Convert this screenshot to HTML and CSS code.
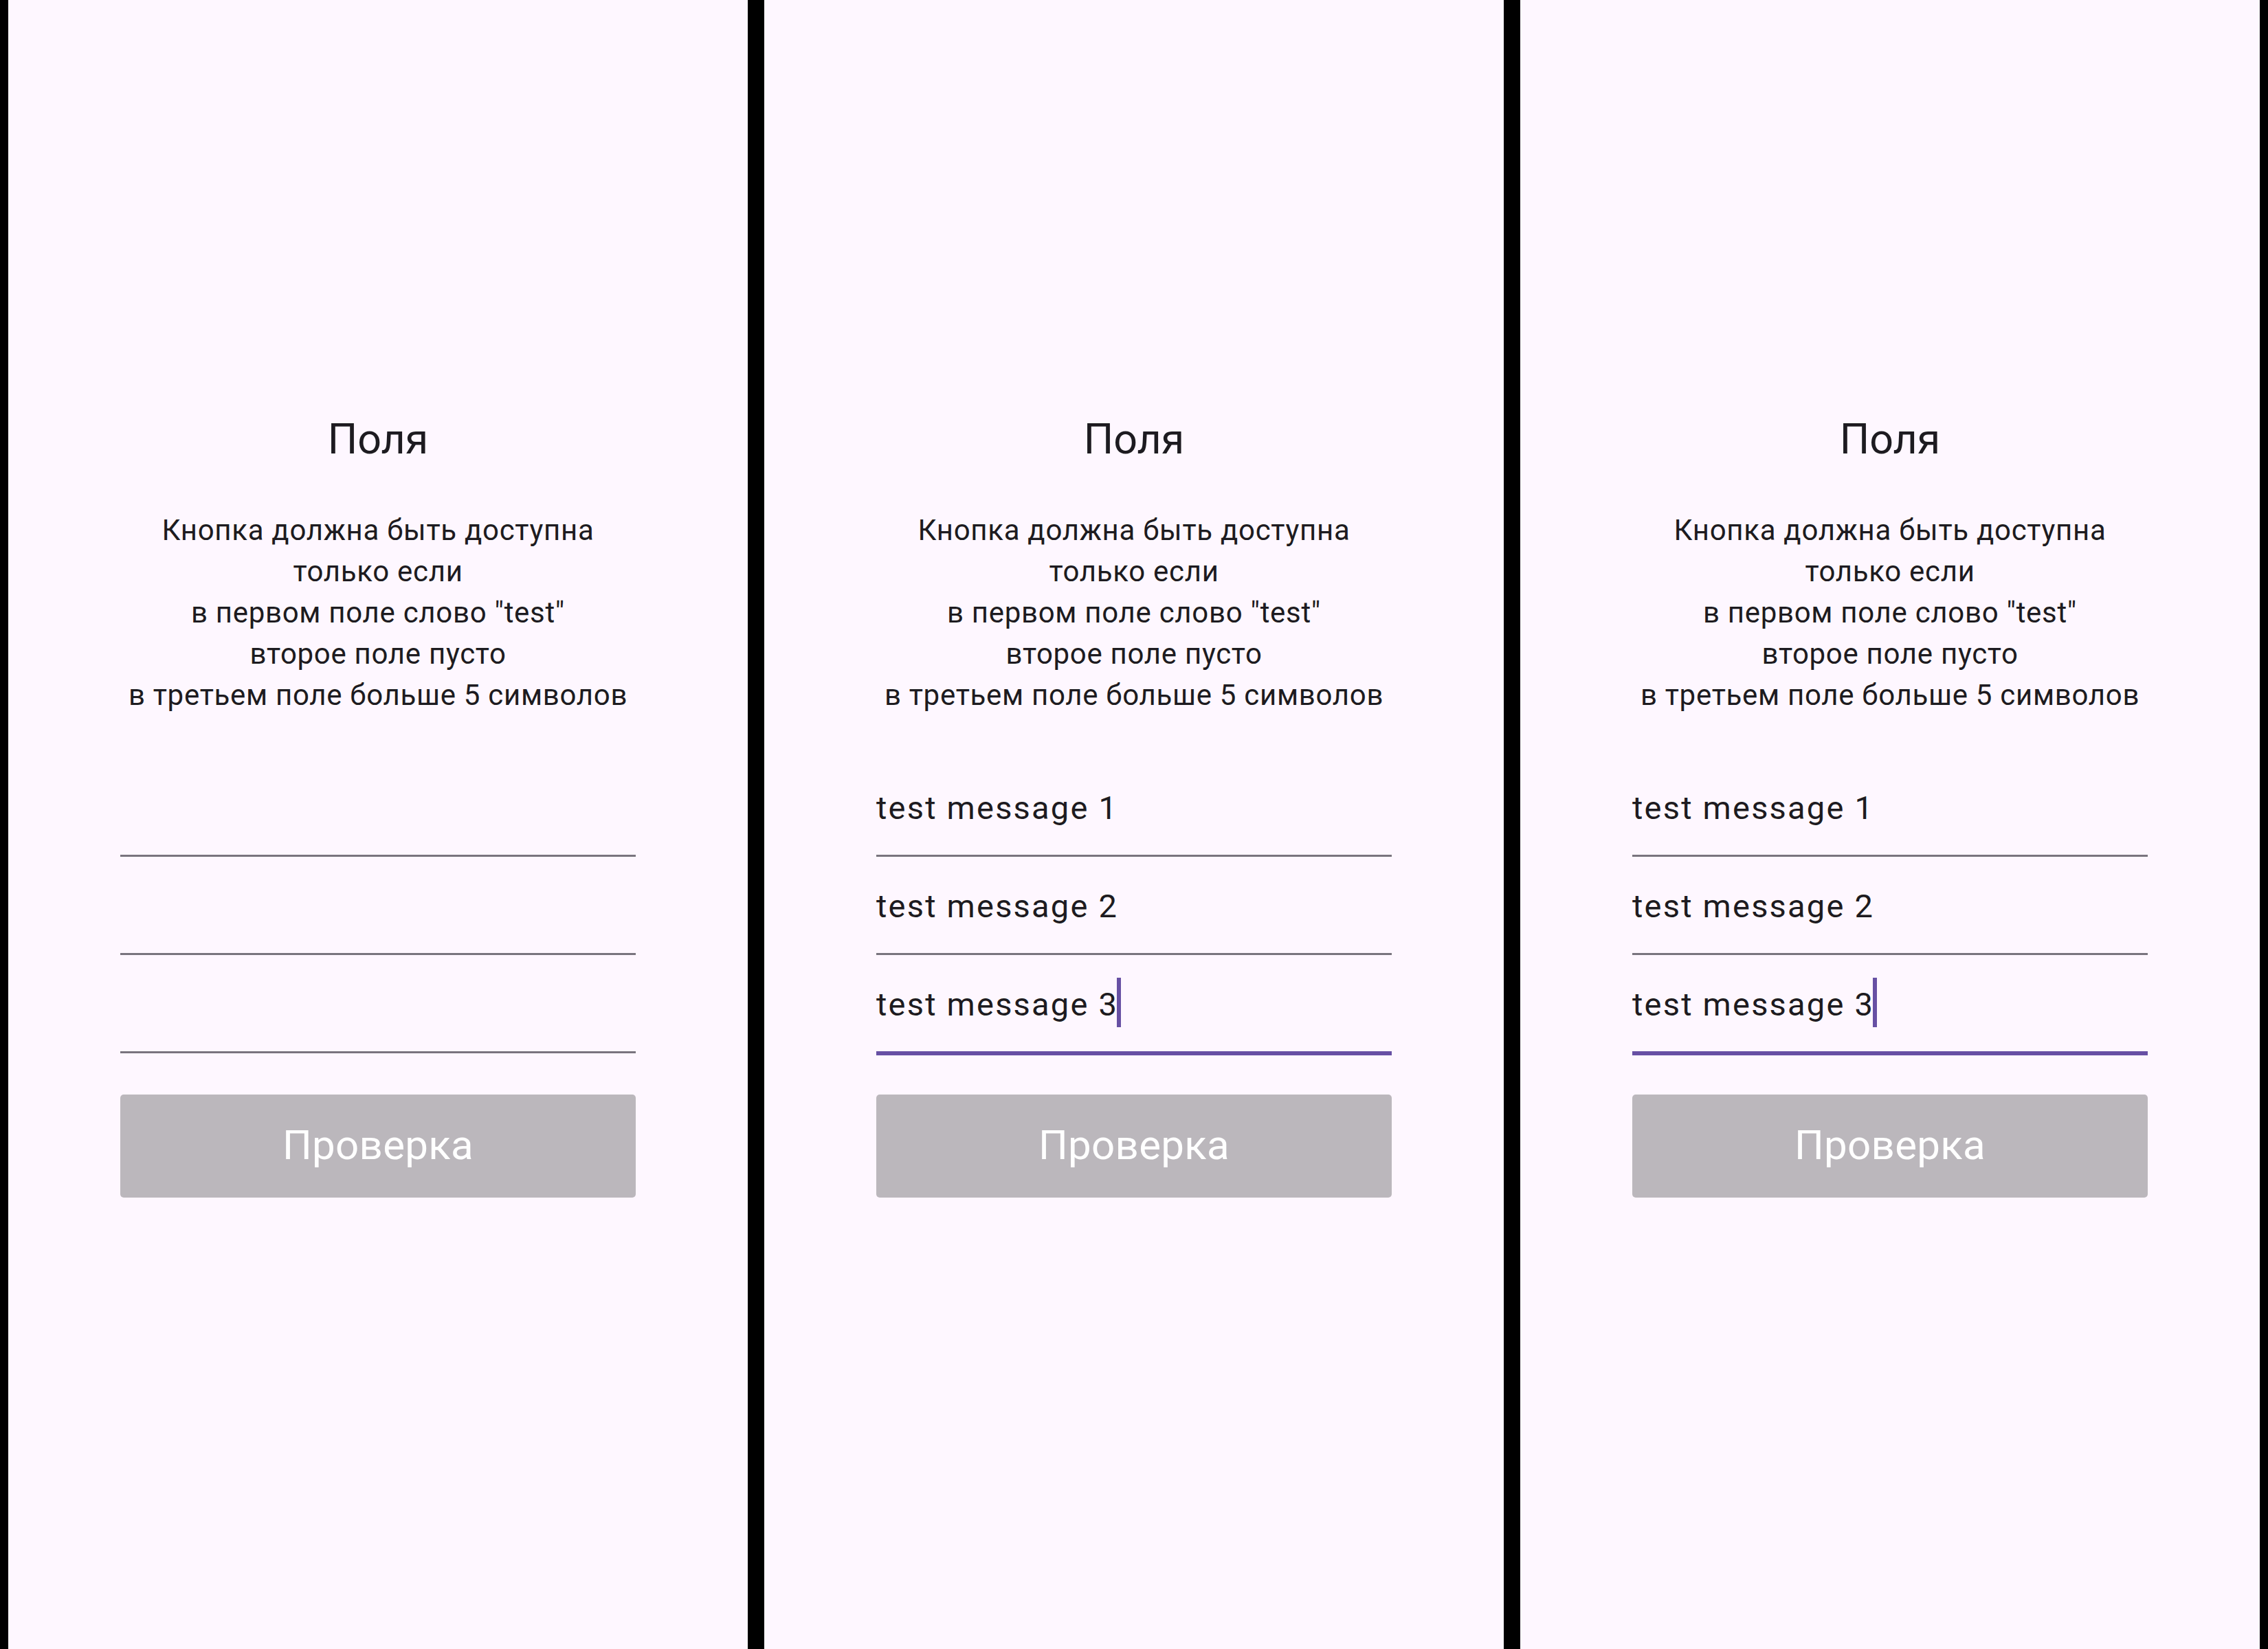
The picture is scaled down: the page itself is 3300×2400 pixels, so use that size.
FILE: index.html
```html
<!DOCTYPE html>
<html lang="ru">
<head>
<meta charset="utf-8">
<title>Поля</title>
<link rel="stylesheet" href="styles.css">
</head>
<body>
<div class="screens">
  <section class="screen">
    <h1 class="title">Поля</h1>
    <p class="desc">Кнопка должна быть доступна<br>только если<br>в первом поле слово "test"<br>второе поле пусто<br>в третьем поле больше 5 символов</p>
    <div class="form">
      <div class="field"></div>
      <div class="field"></div>
      <div class="field"></div>
      <div class="button">Проверка</div>
    </div>
  </section>
  <section class="screen">
    <h1 class="title">Поля</h1>
    <p class="desc">Кнопка должна быть доступна<br>только если<br>в первом поле слово "test"<br>второе поле пусто<br>в третьем поле больше 5 символов</p>
    <div class="form">
      <div class="field">test message 1</div>
      <div class="field">test message 2</div>
      <div class="field focused"><span class="caret">test message 3</span></div>
      <div class="button">Проверка</div>
    </div>
  </section>
  <section class="screen">
    <h1 class="title">Поля</h1>
    <p class="desc">Кнопка должна быть доступна<br>только если<br>в первом поле слово "test"<br>второе поле пусто<br>в третьем поле больше 5 символов</p>
    <div class="form">
      <div class="field">test message 1</div>
      <div class="field">test message 2</div>
      <div class="field focused"><span class="caret">test message 3</span></div>
      <div class="button">Проверка</div>
    </div>
  </section>
</div>
</body>
</html>
```

FILE: styles.css
```css
html, body {
  margin: 0;
  padding: 0;
  background: #000;
}

.screens {
  display: flex;
  gap: 24px;
  padding: 0 12px;
  height: 2400px;
  box-sizing: border-box;
  font-family: Roboto, "Noto Sans", "Liberation Sans", sans-serif;
  color: #1D1B20;
}

.screen {
  flex: 1 1 0;
  background: #FEF7FF;
  display: flex;
  flex-direction: column;
  align-items: center;
  padding-top: 599px;
  box-sizing: border-box;
}

.title {
  margin: 0;
  font-size: 61px;
  line-height: 80px;
  font-weight: 400;
  text-align: center;
}

.desc {
  margin: 63px 0 0;
  font-size: 42px;
  line-height: 60px;
  letter-spacing: 0.7px;
  text-align: center;
}

.form {
  width: 750px;
  margin-top: 62px;
  display: flex;
  flex-direction: column;
}

.field {
  height: 143px;
  box-sizing: border-box;
  padding-top: 42px;
  font-size: 47px;
  line-height: 60px;
  letter-spacing: 2.2px;
  border-bottom: 3px solid #79747E;
  white-space: nowrap;
}

.field.focused {
  border-bottom-color: #6750A4;
  box-shadow: 0 3px 0 #6750A4;
}

.caret {
  position: relative;
}

.caret::after {
  content: "";
  position: absolute;
  left: 100%;
  margin-left: -2px;
  top: -11px;
  width: 6px;
  height: 72px;
  background: #6750A4;
}

.button {
  margin-top: 60px;
  height: 150px;
  box-sizing: border-box;
  padding-bottom: 4px;
  border-radius: 5px;
  background: #BBB7BC;
  color: #FFFFFF;
  font-size: 60px;
  letter-spacing: 0.3px;
  display: flex;
  align-items: center;
  justify-content: center;
}
```
